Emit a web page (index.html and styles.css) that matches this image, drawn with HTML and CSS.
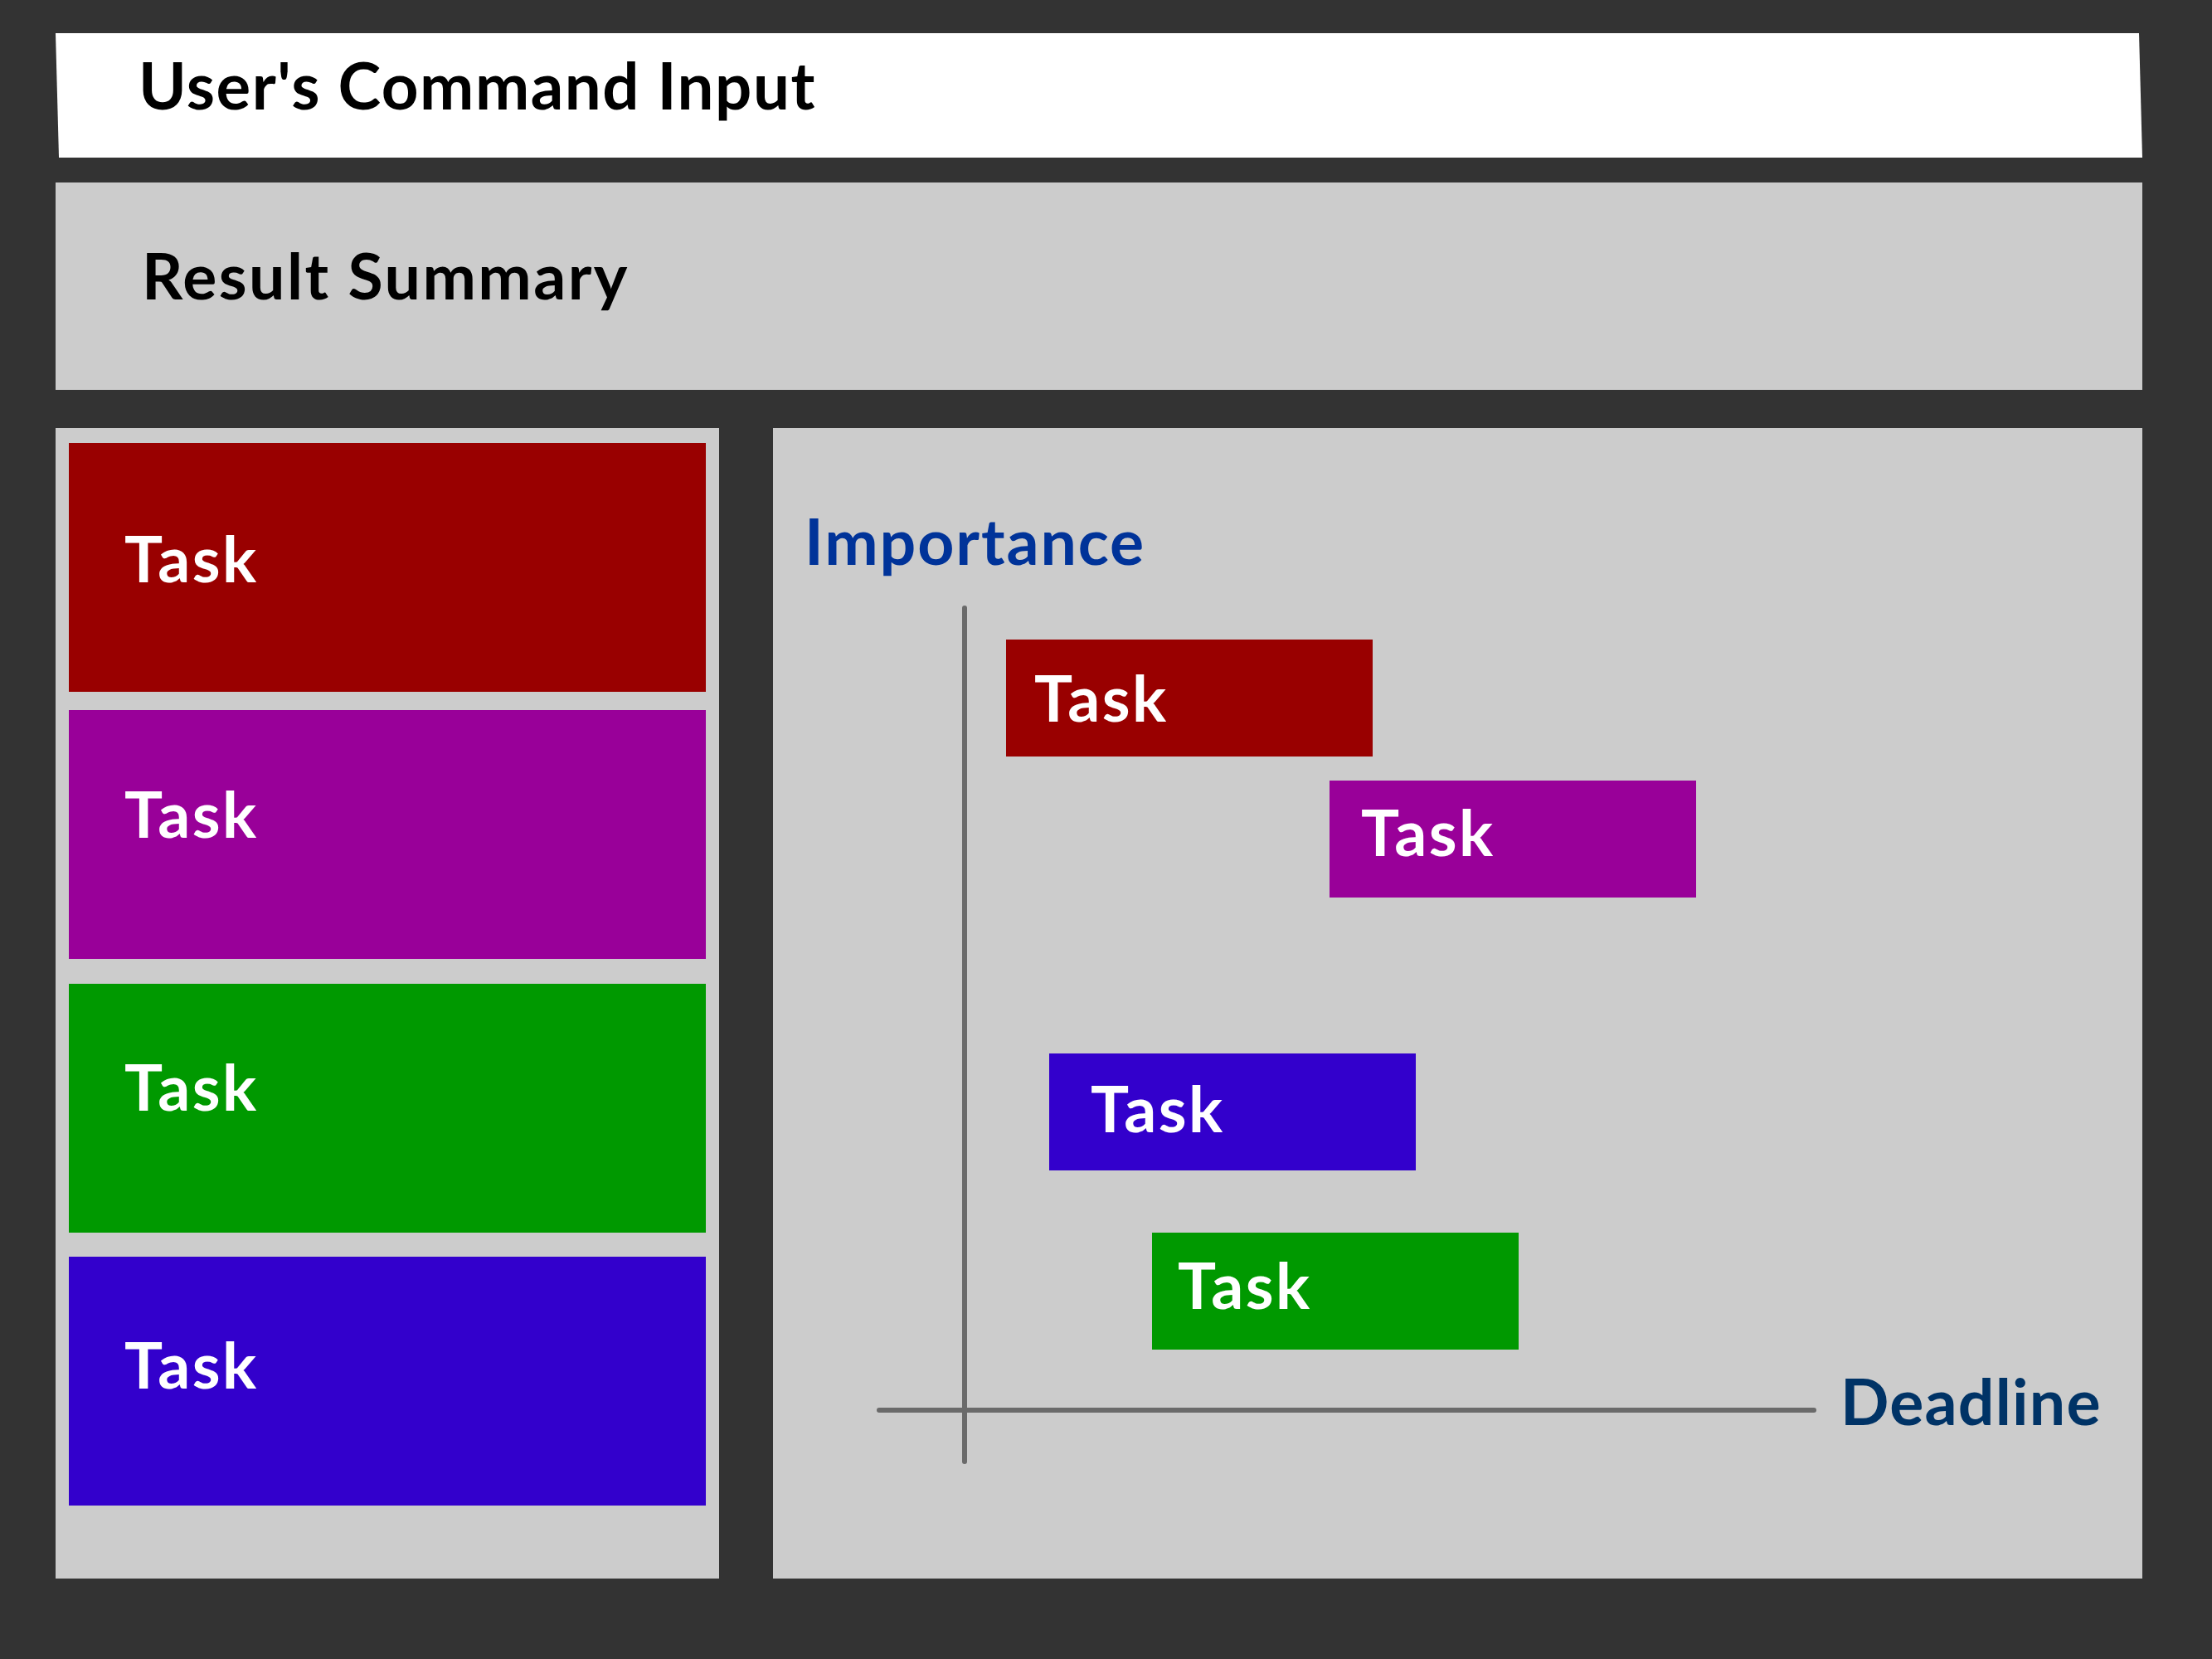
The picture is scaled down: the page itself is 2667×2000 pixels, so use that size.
FILE: index.html
```html
<!DOCTYPE html>
<html lang="en">
<head>
<meta charset="utf-8">
<title>Task Prioritizer</title>
<link rel="stylesheet" href="styles.css">
</head>
<body>
<div class="app">
  <header class="command">
    <div class="command-text">User's Command Input</div>
  </header>
  <section class="summary">
    <div class="summary-text">Result Summary</div>
  </section>
  <main class="panels">
    <aside class="task-list">
      <div class="card card-red"><span class="label">Task</span></div>
      <div class="card card-purple"><span class="label">Task</span></div>
      <div class="card card-green"><span class="label">Task</span></div>
      <div class="card card-blue"><span class="label">Task</span></div>
    </aside>
    <section class="chart">
      <div class="axis-title importance">Importance</div>
      <div class="axis axis-y"></div>
      <div class="axis axis-x"></div>
      <div class="axis-title deadline">Deadline</div>
      <div class="node node-red"><span class="label">Task</span></div>
      <div class="node node-purple"><span class="label">Task</span></div>
      <div class="node node-blue"><span class="label">Task</span></div>
      <div class="node node-green"><span class="label">Task</span></div>
    </section>
  </main>
</div>
</body>
</html>
```
FILE: styles.css
```css
* { box-sizing: border-box; }
html, body {
  margin: 0;
  padding: 0;
  background: #333333;
}
body {
  width: 2667px;
  height: 2000px;
  overflow: hidden;
  font-family: Lato, "Open Sans", sans-serif;
  font-weight: 700;
}
.app {
  display: flex;
  flex-direction: column;
  padding: 40px 84px 0 67px;
}
.command {
  height: 150px;
  background: #ffffff;
  clip-path: polygon(0 0, calc(100% - 4px) 0, 100% 100%, 4px 100%);
  padding: 23px 0 0 100px;
}
.command-text {
  font-size: 78px;
  line-height: 78px;
  letter-spacing: 1.5px;
  color: #000000;
}
.summary {
  margin-top: 30px;
  height: 250px;
  background: #cccccc;
  padding: 73px 0 0 104px;
}
.summary-text {
  font-size: 77px;
  line-height: 77px;
  letter-spacing: 2.4px;
  color: #000000;
}
.panels {
  margin-top: 46px;
  height: 1387px;
  display: flex;
  gap: 65px;
}
.task-list {
  width: 800px;
  background: #cccccc;
  padding: 18px 16px 0 16px;
  display: flex;
  flex-direction: column;
}
.card {
  height: 300px;
  padding-left: 67px;
  color: #ffffff;
}
.label {
  display: block;
  font-size: 77px;
  line-height: 77px;
  letter-spacing: 2.5px;
  color: #ffffff;
}
.card-red { background: #990000; padding-top: 100px; }
.card-purple { background: #990099; margin-top: 22px; padding-top: 86px; }
.card-green { background: #009900; margin-top: 30px; padding-top: 85px; }
.card-blue { background: #3300cc; margin-top: 29px; padding-top: 91px; }

.chart {
  flex: 1;
  background: #cccccc;
  position: relative;
}
.axis-title {
  position: absolute;
  font-size: 77px;
  line-height: 77px;
}
.importance {
  left: 38px;
  top: 97px;
  letter-spacing: 1.9px;
  color: #003399;
}
.deadline {
  left: 1287px;
  top: 1134px;
  letter-spacing: 1.2px;
  color: #003366;
}
.axis {
  position: absolute;
  background: #6a6a6a;
  border-radius: 3px;
}
.axis-y {
  left: 228px;
  top: 214px;
  width: 6px;
  height: 1035px;
}
.axis-x {
  left: 125px;
  top: 1181px;
  width: 1133px;
  height: 6px;
}
.node {
  position: absolute;
  width: 442px;
  height: 141px;
}
.node-red { left: 281px; top: 255px; background: #990000; padding: 31px 0 0 34px; }
.node-purple { left: 671px; top: 425px; background: #990099; padding: 23px 0 0 38px; }
.node-blue { left: 333px; top: 754px; background: #3300cc; padding: 27px 0 0 50px; }
.node-green { left: 457px; top: 970px; background: #009900; padding: 24px 0 0 31px; }
```
